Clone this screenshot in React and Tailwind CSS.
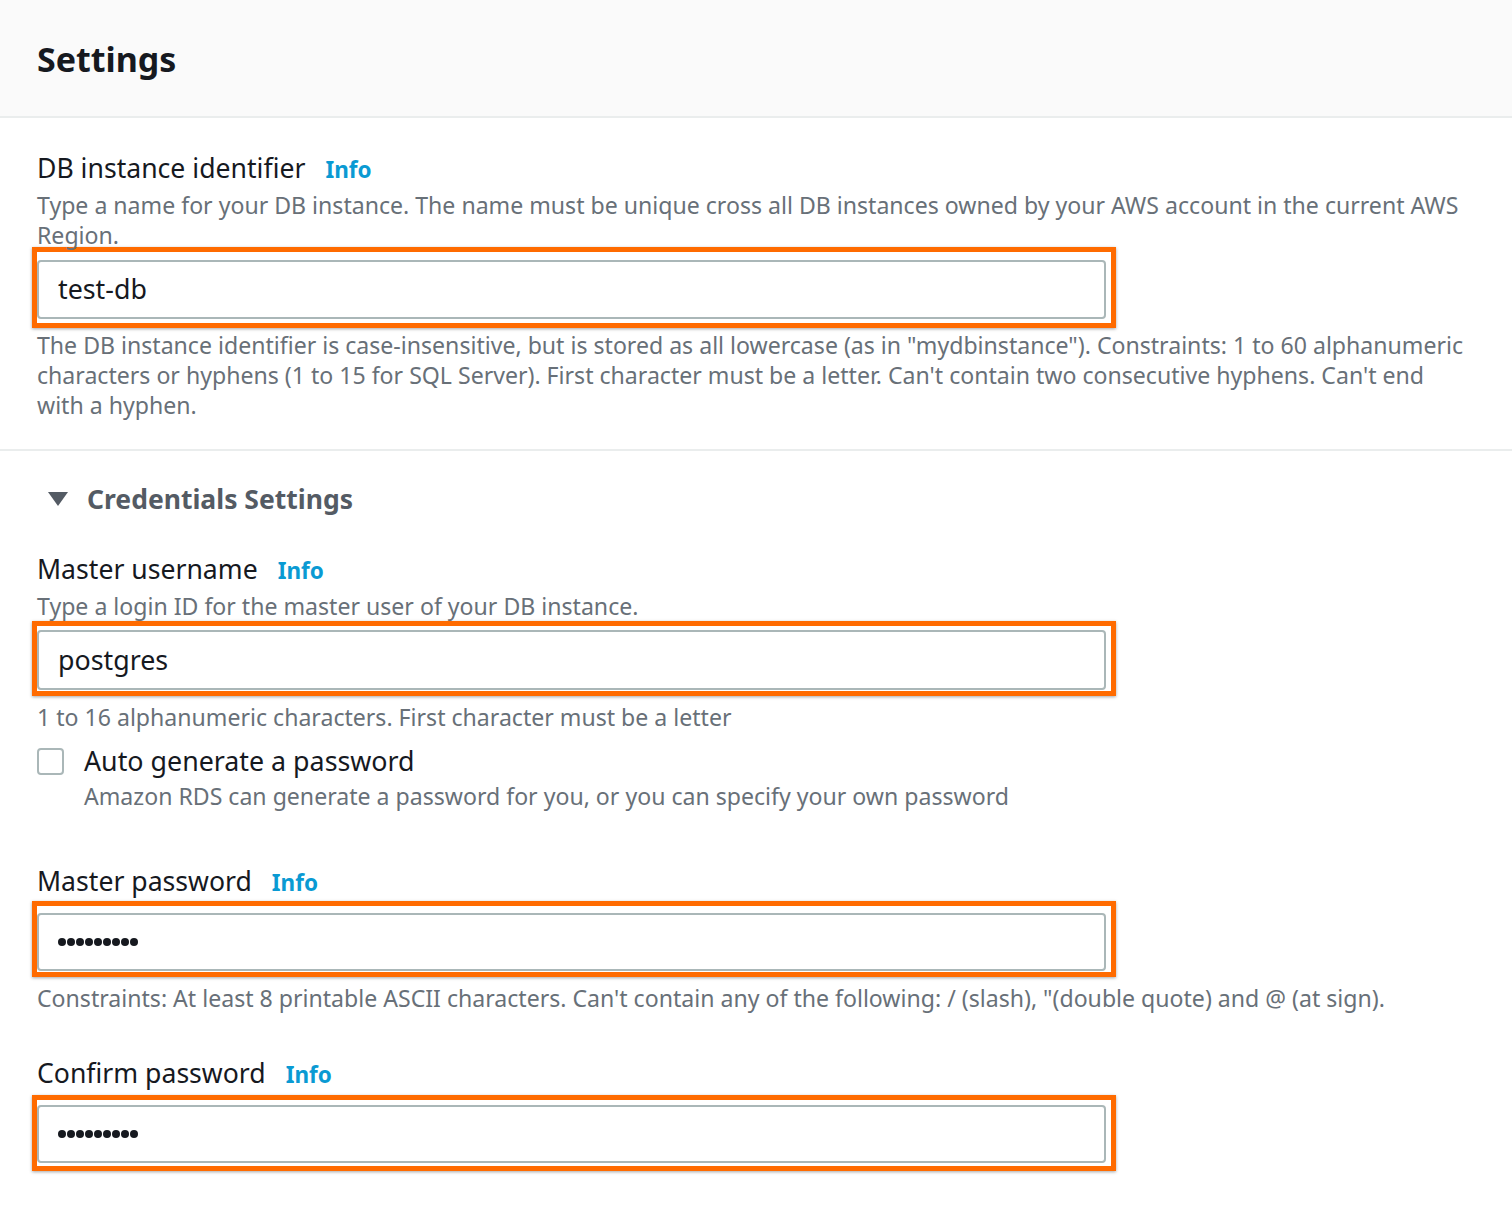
import React from 'react';

const font = { fontFamily: '"Noto Sans", "Open Sans", Arial, sans-serif' };

function Label({ children }) {
  return (
    <div className="flex items-baseline text-[26.6px] leading-[36px] text-[#16191f]">
      <span>{children}</span>
      <span className="ml-[20px] text-[22.5px] font-bold text-[#0a9ad3]">Info</span>
    </div>
  );
}

function Hint({ className = '', children }) {
  return <p className={`text-[23.1px] leading-[30px] text-[#687078] ${className}`}>{children}</p>;
}

function Dots() {
  return (
    <div className="flex gap-[1px]">
      {[0, 1, 2, 3, 4, 5, 6, 7, 8].map((i) => (
        <span key={i} className="h-[8px] w-[8px] rounded-full bg-[#16191f]" />
      ))}
    </div>
  );
}

// orange annotation frame drawn round an input
function Highlighted({ value, password, pad = 'pt-[8px] pb-[4px]', h = 'h-[59px]' }) {
  return (
    <div className={`-ml-[5px] w-[1084px] border-[5px] border-[#ff6b00] pr-[5px] shadow-[0_1px_3px_rgba(0,0,0,0.35)] ${pad}`}>
      <div className={`flex items-center rounded-[4px] border-2 border-[#aab7b8] bg-white pl-[19px] ${h}`}>
        {password ? <Dots /> : <span className="text-[26.8px] text-[#16191f]">{value}</span>}
      </div>
    </div>
  );
}

export default function App() {
  return (
    <div className="min-h-[1206px] bg-white" style={font}>
      <div className="h-[118px] border-b-2 border-[#eaeded] bg-[#fafafa] px-[37px] pt-[37px]">
        <h1 className="text-[34px] font-bold leading-[44px] text-[#16191f]">Settings</h1>
      </div>

      <div className="border-b-2 border-[#eaeded] px-[37px] pr-[48px] pt-[32px] pb-[29px]">
        <Label>DB instance identifier</Label>
        <Hint className="mt-[2px]">
          Type a name for your DB instance. The name must be unique cross all DB instances owned by your AWS account in the current AWS Region.
        </Hint>
        <div className="-mt-[3px]">
          <Highlighted value="test-db" />
        </div>
        <Hint className="mt-[2px]">
          The DB instance identifier is case-insensitive, but is stored as all lowercase (as in "mydbinstance"). Constraints: 1 to 60 alphanumeric characters or hyphens (1 to 15 for SQL Server). First character must be a letter. Can't contain two consecutive hyphens. Can't end with a hyphen.
        </Hint>
      </div>

      <div className="px-[37px] pr-[48px] pt-[30px]">
        <div className="flex items-center gap-[19px] pl-[11px]">
          <svg width="20" height="16" viewBox="0 0 20 16">
            <polygon points="0,1 20,1 10,15" fill="#545b64" />
          </svg>
          <span className="text-[26.5px] font-bold leading-[36px] text-[#545b64]">Credentials Settings</span>
        </div>

        <div className="mt-[34px]">
          <Label>Master username</Label>
          <Hint className="mt-[2px]">Type a login ID for the master user of your DB instance.</Hint>
          <Highlighted value="postgres" pad="pt-[4px] pb-[1px]" h="h-[60px]" />
          <Hint className="mt-[6px]">1 to 16 alphanumeric characters. First character must be a letter</Hint>
        </div>

        <div className="mt-[11px] flex gap-[20px]">
          <div className="mt-[5px] h-[27px] w-[27px] shrink-0 rounded-[4px] border-2 border-[#aab7b8] bg-white" />
          <div>
            <div className="text-[26.8px] leading-[36px] text-[#16191f]">Auto generate a password</div>
            <Hint className="mt-[2px]">Amazon RDS can generate a password for you, or you can specify your own password</Hint>
          </div>
        </div>

        <div className="mt-[52px]">
          <Label>Master password</Label>
          <Highlighted password pad="pt-[7px] pb-[1px]" h="h-[58px]" />
          <Hint className="mt-[6px]">
            Constraints: At least 8 printable ASCII characters. Can't contain any of the following: / (slash), "(double quote) and @ (at sign).
          </Hint>
        </div>

        <div className="mt-[42px]">
          <Label>Confirm password</Label>
          <div className="mt-[2px]">
            <Highlighted password pad="pt-[5px] pb-[3px]" h="h-[58px]" />
          </div>
        </div>
      </div>
    </div>
  );
}
